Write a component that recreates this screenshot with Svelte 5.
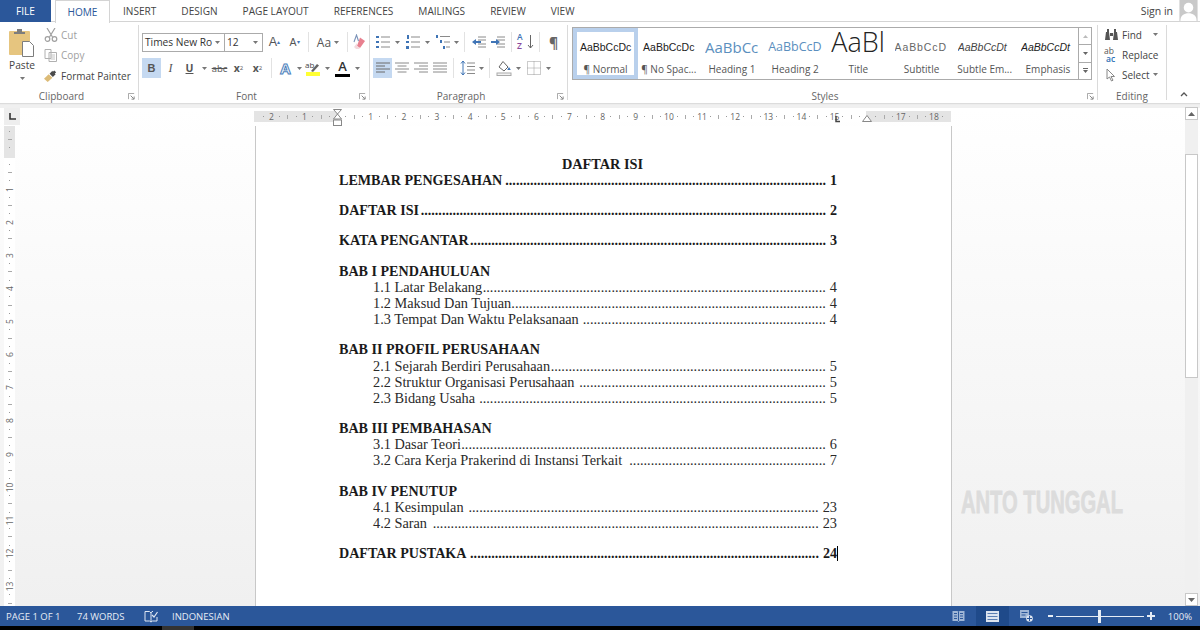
<script lang="ts">
  const tabs = ['INSERT', 'DESIGN', 'PAGE LAYOUT', 'REFERENCES', 'MAILINGS', 'REVIEW', 'VIEW'];

  const styles = [
    { name: '¶ Normal', sample: 'AaBbCcDc', kind: 'normal', on: true },
    { name: '¶ No Spac...', sample: 'AaBbCcDc', kind: 'normal' },
    { name: 'Heading 1', sample: 'AaBbCc', kind: 'h1' },
    { name: 'Heading 2', sample: 'AaBbCcD', kind: 'h2' },
    { name: 'Title', sample: 'AaBl', kind: 'title' },
    { name: 'Subtitle', sample: 'AaBbCcD', kind: 'sub' },
    { name: 'Subtle Em...', sample: 'AaBbCcDt', kind: 'em' },
    { name: 'Emphasis', sample: 'AaBbCcDt', kind: 'emph' }
  ];

  const toc = [
    [{ t: 'LEMBAR PENGESAHAN', p: 1, b: true }],
    [{ t: 'DAFTAR ISI', p: 2, b: true }],
    [{ t: 'KATA PENGANTAR', p: 3, b: true }],
    [
      { t: 'BAB I PENDAHULUAN', b: true },
      { t: '1.1 Latar Belakang', p: 4 },
      { t: '1.2 Maksud Dan Tujuan', p: 4 },
      { t: '1.3 Tempat Dan Waktu Pelaksanaan ', p: 4 }
    ],
    [
      { t: 'BAB II PROFIL PERUSAHAAN', b: true },
      { t: '2.1 Sejarah Berdiri Perusahaan', p: 5 },
      { t: '2.2 Struktur Organisasi Perusahaan ', p: 5 },
      { t: '2.3 Bidang Usaha ', p: 5 }
    ],
    [
      { t: 'BAB III PEMBAHASAN', b: true },
      { t: '3.1 Dasar Teori', p: 6 },
      { t: '3.2 Cara Kerja Prakerind di Instansi Terkait ', p: 7 }
    ],
    [
      { t: 'BAB IV PENUTUP', b: true },
      { t: '4.1 Kesimpulan ', p: 23 },
      { t: '4.2 Saran ', p: 23 }
    ],
    [{ t: 'DAFTAR PUSTAKA ', p: 24, b: true, end: true }]
  ];

  // fills a leader with as many dots as fit (a dot is a quarter em in Times)
  function leader(el: HTMLElement) {
    const size = parseFloat(getComputedStyle(el).fontSize);
    el.textContent = '.'.repeat(Math.floor(el.clientWidth / (size * 0.25)));
  }

  // ruler marks, four per centimetre; cm 0 is the page margin
  const mark = (i: number) => {
    if (i % 4 === 0) return i === 0 ? { k: 'none' } : { k: 'num', n: Math.abs(i / 4) };
    return { k: i % 2 === 0 ? 'tick' : 'dot' };
  };
  // cm 16 sits under the right indent marker
  const hMarks = Array.from({ length: 83 }, (_, i) => (i - 9 === 64 ? { k: 'none' } : mark(i - 9)));
  const vMarks = Array.from({ length: 58 }, (_, i) => mark(i - 3));
</script>

{#snippet caret()}
  <svg class="caret" viewBox="0 0 5 3"><path d="M0 0h5L2.500 3z" fill="#777" /></svg>
{/snippet}

{#snippet launcher()}
  <svg class="launch" viewBox="0 0 8 8"><path d="M.5 7V.5H7" fill="none" stroke="#999" /><path d="M3 3l3.500 3.500M7 4v3H4" fill="none" stroke="#777" /></svg>
{/snippet}

<div class="word">
  <nav class="tabs">
    <span class="file">FILE</span>
    <span class="home">HOME</span>
    {#each tabs as tab}
      <span class="tab">{tab}</span>
    {/each}
    <span class="signin">Sign in</span>
    <svg class="avatar" viewBox="0 0 19 22">
      <rect width="19" height="22" fill="#c9c9c9" />
      <circle cx="9.500" cy="8" r="5" fill="#fff" />
      <path d="M1 22c0-6 4-8 8.500-8s8.500 2 8.500 8z" fill="#fff" />
    </svg>
  </nav>

  <section class="ribbon">
    <div class="group clipboard">
      <div class="clip-body">
        <div class="paste">
          <svg width="26" height="28" viewBox="0 0 26 28">
            <rect x="0" y="2" width="21" height="24" rx="1" fill="#e6c57f" />
            <path d="M5 5V3h3V0h5v3h3v2z" fill="#7d7d7d" />
            <path d="M13.500 12.500h7l4 4v11h-11z" fill="#fff" stroke="#7d7d7d" />
          </svg>
          <span>Paste</span>
          {@render caret()}
        </div>
        <div class="clip-list">
          <div class="clip-item faded">
            <svg width="14" height="14" viewBox="0 0 14 14"><path d="M3 0l5.500 9M11 0L5.500 9" stroke="#a0a0a0" stroke-width="1.200" fill="none" /><circle cx="3.500" cy="11" r="2.300" fill="none" stroke="#a0a0a0" stroke-width="1.200" /><circle cx="10.500" cy="11" r="2.300" fill="none" stroke="#a0a0a0" stroke-width="1.200" /></svg>
            Cut
          </div>
          <div class="clip-item faded">
            <svg width="14" height="14" viewBox="0 0 14 14"><path d="M1 1.500h6v9H1zM5 4.500h7.500v9H5z" fill="#fff" stroke="#b0b0b0" /><path d="M6.500 7h4.500M6.500 9h4.500M6.500 11h4.500" stroke="#c4c4c4" /></svg>
            Copy
          </div>
          <div class="clip-item">
            <svg width="14" height="14" viewBox="0 0 15 14"><path d="M0 10l5-5 4 4-5 4.500z" fill="#dcbb77" /><path d="M6 4.500l3-3 .5 1L11 1l2 2-1.500 1.500 1 .5-3 3z" fill="#4a4a4a" /></svg>
            Format Painter
          </div>
        </div>
      </div>
      <footer>Clipboard {@render launcher()}</footer>
    </div>

    <div class="group font">
      <div class="rows">
        <div class="row top">
          <div class="combo name">Times New Ro {@render caret()}</div>
          <div class="combo size">12 {@render caret()}</div>
          <span class="btn grow">A<sup>▴</sup></span>
          <span class="btn shrink">A<sup>▾</sup></span>
          <i class="sep"></i>
          <span class="btn wide">Aa {@render caret()}</span>
          <i class="sep"></i>
          <span class="btn eraser">
            <svg width="16" height="16" viewBox="0 0 16 16"><path d="M9 3.500l5 3.500-5 7-3-2z" fill="#e8808f" /><path d="M6 12l3 2-1 1H5l-2-2 3-4z" fill="#f3d9dd" /><path d="M3 8l2.500-7 2 6" fill="none" stroke="#7b93b8" stroke-width="1.100" /></svg>
          </span>
        </div>
        <div class="row bottom">
          <span class="btn on bold">B</span>
          <span class="btn ital">I</span>
          <span class="btn under">U</span>
          <span class="dd">{@render caret()}</span>
          <span class="btn strike">abc</span>
          <span class="btn script">x<sub>2</sub></span>
          <span class="btn script">x<sup>2</sup></span>
          <i class="sep"></i>
          <span class="btn effect">A</span>
          <span class="dd small">{@render caret()}</span>
          <span class="btn">
            <svg width="16" height="16" viewBox="0 0 16 16"><rect x="1" y="12" width="14" height="4" fill="#ffff33" /><path d="M6 11l6-7 2 1.500L8 12z" fill="#666" /></svg>
            <b class="ab">ab</b>
          </span>
          <span class="dd">{@render caret()}</span>
          <span class="btn colour">A</span>
          <span class="dd">{@render caret()}</span>
        </div>
      </div>
      <footer>Font {@render launcher()}</footer>
    </div>

    <div class="group para">
      <div class="rows">
        <div class="row top">
          <span class="btn"><svg width="16" height="16" viewBox="0 0 16 16"><path d="M6 3h9M6 8h9M6 13h9" stroke="#8a8a8a" /><path d="M1 2h3v2H1zM1 7h3v2H1zM1 12h3v2H1z" fill="#3f74b5" /></svg></span>
          <span class="dd">{@render caret()}</span>
          <span class="btn"><svg width="16" height="16" viewBox="0 0 16 16"><path d="M6 3h9M6 8h9M6 13h9" stroke="#8a8a8a" /><path d="M2 1h2v4H2zM1 7h3v2H1zM1 12h3v3H1z" fill="#3f74b5" /></svg></span>
          <span class="dd">{@render caret()}</span>
          <span class="btn"><svg width="16" height="16" viewBox="0 0 16 16"><path d="M5 2.500h10M9 8h6M11 13h4" stroke="#8a8a8a" /><path d="M1 1h2v3H1zM5 6h2v3H5zM8 12h2v3H8z" fill="#3f74b5" /></svg></span>
          <span class="dd small">{@render caret()}</span>
          <i class="sep"></i>
          <span class="btn"><svg width="16" height="16" viewBox="0 0 16 16"><path d="M7 3h8M7 6h8M7 10h8M7 13h8" stroke="#8a8a8a" /><path d="M1 8l4-3v2h5v2H5v2z" fill="#3f74b5" /></svg></span>
          <span class="btn"><svg width="16" height="16" viewBox="0 0 16 16"><path d="M7 3h8M7 6h8M7 10h8M7 13h8" stroke="#8a8a8a" /><path d="M10 8L6 5v2H1v2h5v2z" fill="#3f74b5" /></svg></span>
          <i class="sep"></i>
          <span class="btn sort"><b>A</b><b class="z">Z</b><svg width="7" height="16" viewBox="0 0 7 16"><path d="M3.500 1v13M1 11l2.500 3L6 11" fill="none" stroke="#666" /></svg></span>
          <i class="sep"></i>
          <span class="btn pil">¶</span>
        </div>
        <div class="row bottom">
          <span class="btn on"><svg width="14" height="12" viewBox="0 0 14 12"><path d="M0 1h14M0 4h9M0 7h14M0 10h9" stroke="#6a6a6a" /></svg></span>
          <span class="btn"><svg width="14" height="12" viewBox="0 0 14 12"><path d="M0 1h14M2.500 4h9M0 7h14M2.500 10h9" stroke="#8a8a8a" /></svg></span>
          <span class="btn"><svg width="14" height="12" viewBox="0 0 14 12"><path d="M0 1h14M5 4h9M0 7h14M5 10h9" stroke="#8a8a8a" /></svg></span>
          <span class="btn"><svg width="14" height="12" viewBox="0 0 14 12"><path d="M0 1h14M0 4h14M0 7h14M0 10h14" stroke="#8a8a8a" /></svg></span>
          <i class="sep"></i>
          <span class="btn"><svg width="16" height="16" viewBox="0 0 16 16"><path d="M7 3h8M7 6.500h8M7 10h8M7 13.500h8" stroke="#8a8a8a" /><path d="M3 1v14M1 3.500L3 1l2 2.500M1 12.500L3 15l2-2.500" fill="none" stroke="#3f74b5" /></svg></span>
          <span class="dd small">{@render caret()}</span>
          <i class="sep"></i>
          <span class="btn"><svg width="16" height="16" viewBox="0 0 16 16"><path d="M3 7l4-5.500L12 7l-4 4z" fill="#fff" stroke="#666" /><path d="M13 7l1.800 3h-3.600z" fill="#3f74b5" /><rect x="1" y="13" width="14" height="2.500" fill="#f2f2f2" stroke="#aaa" /></svg></span>
          <span class="dd">{@render caret()}</span>
          <span class="btn"><svg width="14" height="14" viewBox="0 0 14 14"><path d="M.5.500h13v13H.5zM7 .5v13M.5 7h13" fill="none" stroke="#999" stroke-dasharray="1 1" /></svg></span>
          <span class="dd">{@render caret()}</span>
        </div>
      </div>
      <footer>Paragraph {@render launcher()}</footer>
    </div>

    <div class="group styles">
      <div class="gallery">
        <div class="cells">
          {#each styles as s}
            <div class="cell" class:on={s.on}>
              <div class="sample {s.kind}">{s.sample}</div>
              <div class="sname">{s.name}</div>
            </div>
          {/each}
        </div>
        <div class="scroller">
          <span><svg viewBox="0 0 5 3"><path d="M0 3h5L2.500 0z" fill="#bbb" /></svg></span>
          <span><svg viewBox="0 0 5 3"><path d="M0 0h5L2.500 3z" fill="#666" /></svg></span>
          <span><svg viewBox="0 0 5 5"><path d="M0 0h5v1H0zM0 2h5L2.500 5z" fill="#666" /></svg></span>
        </div>
      </div>
      <footer>Styles {@render launcher()}</footer>
    </div>

    <div class="group editing">
      <div class="edit-list">
        <div class="clip-item">
          <svg width="15" height="14" viewBox="0 0 15 14"><path d="M1 12l1-8h3l1 8zM9 12l1-8h3l1 8zM3 1h2v3H3zM10 1h2v3h-2zM6 5h3v3H6z" fill="#555" /></svg>
          Find <span class="find-dd">{@render caret()}</span>
        </div>
        <div class="clip-item">
          <span class="abac"><b>ab</b><b class="ac">ac</b></span>
          Replace
        </div>
        <div class="clip-item">
          <svg width="15" height="14" viewBox="0 0 15 14"><path d="M3 1v10l2.500-2 2 4 1.500-.8-2-3.700h3.500z" fill="#fff" stroke="#888" /></svg>
          Select {@render caret()}
        </div>
      </div>
      <footer>Editing</footer>
    </div>

    <div class="collapse">
      <svg width="8" height="5" viewBox="0 0 8 5"><path d="M1 4l3-3 3 3" fill="none" stroke="#555" stroke-width="1.300" /></svg>
    </div>
  </section>

  <main class="work">
    <div class="topline">
      <div class="corner">
        <svg width="7" height="7" viewBox="0 0 7 7"><path d="M1 0v6h6" fill="none" stroke="#333" stroke-width="1.600" /></svg>
      </div>
      <div class="hruler">
        {#each hMarks as m}
          <span class="hcell">
            {#if m.k === 'num'}{m.n}{:else if m.k === 'tick'}<i class="vtick"></i>{:else if m.k === 'dot'}<i class="pip"></i>{/if}
          </span>
        {/each}
        <svg class="indent-l" width="10" height="17" viewBox="0 0 10 17">
          <path d="M.5.500h8L4.500 5zM4.500 5l4 5h-8z" fill="#fff" stroke="#888" />
          <rect x=".5" y="11" width="8" height="5.500" fill="#fff" stroke="#888" />
        </svg>
        <svg class="indent-r" width="10" height="7" viewBox="0 0 10 7"><path d="M5 .5l4.500 6h-9z" fill="#fff" stroke="#888" /></svg>
        <svg class="tabstop" width="7" height="7" viewBox="0 0 7 7"><path d="M3 0v5.500h4" fill="none" stroke="#444" stroke-width="1.500" /></svg>
      </div>
    </div>

    <div class="below">
      <div class="vruler">
        {#each vMarks as m}
          <span class="vcell">
            {#if m.k === 'num'}<em>{m.n}</em>{:else if m.k === 'tick'}<i class="htick"></i>{:else if m.k === 'dot'}<i class="pip"></i>{/if}
          </span>
        {/each}
      </div>

      <article class="page">
        <h1>DAFTAR ISI</h1>
        {#each toc as block}
          <div class="block">
            {#each block as line}
              <div class="line" class:bold={line.b} class:sub={!line.b}>
                <span class="label">{line.t}</span>
                {#if line.p}
                  <span class="leader" use:leader></span>
                  <span class="num">{line.p}</span>
                {/if}
                {#if line.end}<i class="cursor"></i>{/if}
              </div>
            {/each}
          </div>
        {/each}
      </article>

      <aside class="scrollbar">
        <span class="arrow"><svg viewBox="0 0 7 4"><path d="M0 4h7L3.500 0z" fill="#666" /></svg></span>
        <span class="thumb"></span>
        <span class="arrow down"><svg viewBox="0 0 7 4"><path d="M0 0h7L3.500 4z" fill="#666" /></svg></span>
      </aside>

      <div class="watermark">ANTO TUNGGAL</div>
    </div>
  </main>

  <footer class="status">
    <span class="s-page">PAGE 1 OF 1</span>
    <span class="s-words">74 WORDS</span>
    <svg class="s-book" width="14" height="13" viewBox="0 0 14 13"><path d="M1 1.500h4.500L7 3v9l-1.500-1H1zM7 3l1-1.500h1M7 12l1.500-1H13V7" fill="none" stroke="#dfe7f3" /><path d="M8 5l2 2 3.500-5" fill="none" stroke="#dfe7f3" stroke-width="1.200" /></svg>
    <span class="s-lang">INDONESIAN</span>

    <div class="s-right">
      <svg width="13" height="12" viewBox="0 0 13 12"><path d="M.5 1h5L6.500 2l1-1h5v10h-5l-1 1-1-1h-5z" fill="#9fb6d6" /><path d="M6.500 2v9M2 3.500h3M2 6h3M2 8.500h3M8 3.500h3M8 6h3M8 8.500h3" stroke="#2b579a" /></svg>
      <span class="s-view">
        <svg width="13" height="11" viewBox="0 0 13 11"><rect width="13" height="11" fill="#dce4f0" /><path d="M1.500 2.500h10M1.500 5.500h10M1.500 8.500h10" stroke="#5a7eb3" /></svg>
      </span>
      <svg width="13" height="12" viewBox="0 0 13 12"><path d="M0 0h9v8H0z" fill="#9fb6d6" /><path d="M1.500 2.500h6M1.500 5h4" stroke="#2b579a" /><circle cx="9.500" cy="8.500" r="3.300" fill="#dce4f0" /><path d="M7 8.500h5M9.500 6v5" stroke="#2b579a" /></svg>
      <div class="zoom">
        <span class="zm"></span>
        <span class="zline"><i class="zthumb"></i></span>
        <span class="zp"></span>
      </div>
      <span class="s-pct">100%</span>
    </div>
  </footer>
  <div class="taskbar"><i></i></div>
</div>

<style>
  :global(body) { margin: 0; background: #fff; }

  .word {
    width: 1200px;
    height: 630px;
    display: flex;
    flex-direction: column;
    overflow: hidden;
    font-family: 'Open Sans', 'Noto Sans', sans-serif;
    color: #444;
    background: #fff;
  }

  /* tabs */
  .tabs {
    height: 21px;
    flex: none;
    display: flex;
    align-items: center;
    font-size: 10.1px;
    color: #444;
    border-bottom: 1px solid #d4d4d4;
    position: relative;
  }
  .file {
    width: 51px;
    height: 22px;
    margin-bottom: -1px;
    background: #2b579a;
    color: #fff;
    display: flex;
    align-items: center;
    justify-content: center;
  }
  .home {
    width: 53px;
    height: 22px;
    margin: 0 13px 0 4px;
    box-sizing: content-box;
    border: 1px solid #d4d4d4;
    border-bottom: 0;
    background: #fff;
    color: #2b579a;
    display: flex;
    align-items: center;
    justify-content: center;
    position: relative;
    top: 0.5px;
  }
  .tab { margin-right: 25px; white-space: nowrap; }
  .signin { margin-left: auto; margin-right: 6px; font-size: 10.5px; }
  .avatar { width: 19px; height: 21px; margin-right: 2px; }

  /* ribbon */
  .ribbon {
    height: 81px;
    flex: none;
    display: flex;
    background: #fff;
    border-bottom: 1px solid #dcdcdc;
    box-sizing: content-box;
  }
  .group {
    position: relative;
    box-sizing: border-box;
    margin: 3px 0 3px;
    border-right: 1px solid #dadada;
    display: flex;
    flex-direction: column;
  }
  .group footer {
    position: absolute;
    left: 0;
    right: 0;
    bottom: -3px;
    box-sizing: border-box;
    padding-right: 15px;
    text-align: center;
    font-size: 10px;
    line-height: 13px;
    color: #666;
  }
  .group.editing footer { padding-right: 0; }
  .launch { position: absolute; right: 3px; bottom: 3px; width: 7px; height: 7px; }
  .caret { width: 5px; height: 3px; flex: none; }

  .clipboard { width: 139px; }
  .clip-body { display: flex; padding-top: 2px; }
  .paste {
    width: 44px;
    display: flex;
    flex-direction: column;
    align-items: center;
    font-size: 10.2px;
    padding-top: 2px;
  }
  .paste span { line-height: 14px; margin-top: 1px; }
  .paste .caret { margin-top: 4.5px; }
  .clip-list { display: flex; flex-direction: column; gap: 5.5px; }
  .clip-item {
    height: 15px;
    display: flex;
    align-items: center;
    gap: 3px;
    font-size: 10px;
    white-space: nowrap;
    color: #444;
  }
  .clip-item.faded { color: #a0a0a0; }

  .rows { display: flex; flex-direction: column; gap: 6px; padding: 7px 0 0 3px; }
  .row { display: flex; align-items: center; height: 20px; }
  .font { width: 231px; }
  .para { width: 198px; }

  .btn {
    width: 19px;
    height: 20px;
    flex: none;
    display: flex;
    align-items: center;
    justify-content: center;
    font-size: 11px;
    position: relative;
    color: #555;
  }
  .btn.on { background: #c5d9f1; }
  .btn.wide { width: 30px; gap: 3px; font-size: 12px; white-space: nowrap; }
  .btn.eraser { margin-left: -3px; }
  .dd { width: 11px; height: 20px; flex: none; display: flex; align-items: center; justify-content: center; }
  .dd.small { width: 8px; }
  .sep { width: 1px; height: 20px; background: #e2e2e2; margin: 0 4px; flex: none; }

  .combo {
    height: 19px;
    box-sizing: border-box;
    border: 1px solid #ababab;
    background: #fff;
    display: flex;
    align-items: center;
    justify-content: space-between;
    font-size: 10.2px;
    color: #333;
    padding: 0 4px 0 2px;
    flex: none;
    white-space: nowrap;
  }
  .combo.name { width: 83px; }
  .combo.size { width: 38px; border-left: 0; margin-right: 2px; }
  .grow { font-size: 12.5px; font-family: 'Liberation Sans', sans-serif; }
  .shrink { font-size: 10.5px; font-family: 'Liberation Sans', sans-serif; margin-left: 1px; }
  .grow sup, .shrink sup { font-size: 6px; color: #3f74b5; line-height: 0; }

  .bold { font-weight: 700; font-family: 'Liberation Sans', sans-serif; font-size: 11px; }
  .ital { font-family: 'Liberation Serif', serif; font-style: italic; font-size: 12px; }
  .under { text-decoration: underline; font-weight: 700; font-size: 10.5px; }
  .strike { text-decoration: line-through; font-size: 9.5px; }
  .script { font-weight: 700; font-size: 10.5px; }
  .script sub, .script sup { font-size: 6px; font-weight: 400; line-height: 0; }
  .effect { color: #fff; font-size: 15px; font-weight: 700; -webkit-text-stroke: 1px #4a7ebb; }
  .colour { font-size: 13px; font-weight: 600; color: #333; line-height: 14px; padding-bottom: 4px; box-sizing: border-box; }
  .colour::after { content: ''; position: absolute; left: 2px; right: 2px; bottom: 1px; height: 3px; background: #000; }
  .ab { position: absolute; left: 2px; top: 1px; font-size: 8px; font-weight: 400; color: #444; }

  .sort { gap: 0; }
  .sort b { position: absolute; left: 1px; top: 0; font-size: 8.5px; color: #3f74b5; font-weight: 600; line-height: 10px; }
  .sort .z { top: 9px; color: #8a4a9c; }
  .sort svg { margin-left: 9px; }
  .pil { font-size: 14px; font-weight: 700; color: #666; }

  /* styles gallery */
  .styles { width: 530px; padding: 2px 0 0 4px; }
  .gallery { display: flex; height: 53px; }
  .cells {
    display: flex;
    border: 1px solid #ababab;
    box-sizing: border-box;
    width: 507px;
    height: 53px;
    padding: 1px;
    background: #fff;
  }
  .cell {
    width: 63.2px;
    flex: none;
    box-sizing: border-box;
    border: 2px solid transparent;
    display: flex;
    flex-direction: column;
    align-items: center;
    overflow: hidden;
  }
  .cell.on { box-shadow: 0 0 0 1px #b9d0ec inset, 0 0 0 1px #b9d0ec; border-color: #b9d0ec; }
  .sample {
    height: 31px;
    width: 54px;
    overflow: hidden;
    display: flex;
    align-items: center;
    justify-content: center;
    font-family: 'Liberation Sans', sans-serif;
    font-size: 10.5px;
    color: #222;
    white-space: nowrap;
    flex: none;
  }
  .sample.h1 { font-size: 15px; color: #5b8fbe; font-family: 'Open Sans', sans-serif; justify-content: flex-start; }
  .sample.h2 { font-size: 12.5px; color: #5b8fbe; font-family: 'Open Sans', sans-serif; justify-content: flex-start; }
  .sample.title { font-size: 27px; color: #222; font-family: 'Open Sans', sans-serif; font-weight: 300; justify-content: flex-start; line-height: 26px; align-items: flex-end; padding-bottom: 7px; box-sizing: border-box; }
  .sample.sub { color: #666; letter-spacing: 0.9px; justify-content: flex-start; }
  .sample.em { font-style: italic; color: #444; justify-content: flex-start; }
  .sample.emph { font-style: italic; color: #222; justify-content: flex-start; }
  .sname { font-size: 10px; line-height: 14px; color: #555; white-space: nowrap; }
  .scroller {
    width: 13px;
    height: 53px;
    box-sizing: border-box;
    border: 1px solid #ababab;
    border-left: 0;
    display: flex;
    flex-direction: column;
  }
  .scroller span { flex: 1; display: flex; align-items: center; justify-content: center; border-bottom: 1px solid #ababab; }
  .scroller span:last-child { border-bottom: 0; }
  .scroller svg { width: 5px; height: auto; }

  .editing { width: 69px; padding: 2px 0 0 6px; }
  .edit-list { display: flex; flex-direction: column; gap: 5px; }
  .find-dd { margin-left: 8px; display: flex; }
  .abac { width: 15px; height: 15px; position: relative; font-size: 8.5px; line-height: 7.5px; color: #555; }
  .abac b { font-weight: 400; position: absolute; left: 0; top: 0; }
  .abac .ac { top: 8px; left: 2px; color: #2b6fb5; font-weight: 600; }
  .collapse { flex: 1; display: flex; align-items: flex-end; justify-content: center; padding-bottom: 6px; }

  /* workspace */
  .work {
    flex: 1;
    min-height: 0;
    display: flex;
    flex-direction: column;
    padding-top: 3px;
    border-top: 1px solid #ececec;
    background: linear-gradient(#f0f0f0 0 3px, #fff 3px, #f0f0f0);
  }
  .topline { height: 18px; flex: none; display: flex; align-items: flex-start; padding-left: 4px; }
  .corner {
    width: 16px;
    height: 17px;
    background: #eee;
    display: flex;
    align-items: center;
    justify-content: center;
    flex: none;
  }
  .hruler {
    margin-left: 234px;
    width: 697px;
    height: 11px;
    box-sizing: border-box;
    padding-left: 5px;
    display: flex;
    position: relative;
    margin-top: 3px;
    font-size: 8.5px;
    color: #666;
    background: linear-gradient(90deg, #e4e4e4 84px, #fff 84px 612px, #e4e4e4 612px);
  }
  .hcell { width: 8.295px; flex: none; display: flex; align-items: center; justify-content: center; white-space: nowrap; line-height: 11px; }
  .vtick { width: 1px; height: 4px; background: #aaa; flex: none; }
  .htick { width: 4px; height: 1px; background: #aaa; flex: none; }
  .pip { width: 1px; height: 1px; background: #999; flex: none; }
  .indent-l { position: absolute; left: 79px; top: -2px; }
  .indent-r { position: absolute; left: 608px; top: 4px; }
  .tabstop { position: absolute; left: 579px; top: 5px; }

  .below { flex: 1; min-height: 0; display: flex; position: relative; }
  .vruler {
    width: 11px;
    margin-left: 4px;
    flex: none;
    overflow: hidden;
    padding-top: 1px;
    box-sizing: border-box;
    font-size: 8.5px;
    color: #666;
    background: linear-gradient(#e4e4e4 32px, #fff 32px);
    display: flex;
    flex-direction: column;
  }
  .vcell { height: 8.295px; flex: none; display: flex; align-items: center; justify-content: center; white-space: nowrap; }
  .vcell em { font-style: normal; transform: rotate(-90deg); }

  .page {
    width: 697px;
    margin-left: 240px;
    box-sizing: border-box;
    padding: 29.5px 85px 0 83px;
    background: #fff;
    border-left: 1px solid #c8c8c8;
    border-right: 1px solid #c8c8c8;
    font-family: 'Liberation Serif', 'Times New Roman', serif;
    color: #1a1a1a;
    flex: none;
    overflow: hidden;
  }
  h1 { font-size: 14.3px; margin: 0; text-align: center; line-height: 16.1px; font-weight: 700; }
  .block { margin-top: 14.3px; width: 498px; }
  h1 + .block { margin-top: 0; }
  .line { display: flex; line-height: 16.1px; height: 16.1px; position: relative; }
  .line.bold { font-weight: 700; font-family: inherit; font-size: 14.1px; }
  .line.sub { padding-left: 34px; font-size: 14.3px; color: #2a2a2a; }
  .label { white-space: pre; flex: none; }
  .leader { flex: 1; min-width: 0; overflow: hidden; white-space: nowrap; text-align: right; margin-right: 4px; }
  .num { flex: none; }
  .cursor { position: absolute; right: -1px; top: 1px; width: 1px; height: 15px; background: #000; }

  .scrollbar {
    margin-left: auto;
    margin-right: 2px;
    width: 13px;
    flex: none;
    display: flex;
    flex-direction: column;
    background: #f0f0f0;
    margin-top: -19px;
    box-sizing: border-box;
  }
  .arrow { height: 13px; display: flex; align-items: center; justify-content: center; background: #fff; border: 1px solid #c8c8c8; box-sizing: border-box; flex: none; }
  .arrow svg { width: 7px; }
  .arrow.down { margin-top: auto; }
  .thumb { height: 224px; margin-top: 34px; background: #fff; border: 1px solid #c8c8c8; box-sizing: border-box; flex: none; }

  .watermark {
    position: absolute;
    left: 961px;
    top: 360px;
    font-family: 'Liberation Sans', sans-serif;
    font-weight: 700;
    font-size: 31px;
    line-height: 34px;
    color: #dcdcdc;
    -webkit-text-stroke: 0.8px #dcdcdc;
    white-space: nowrap;
    transform: scaleX(0.65);
    transform-origin: left center;
  }

  /* status bar */
  .status {
    height: 20px;
    flex: none;
    display: flex;
    align-items: center;
    background: #2b579a;
    color: #e6ecf5;
    font-size: 9.5px;
    white-space: nowrap;
  }
  .s-page { margin-left: 6px; width: 71px; }
  .s-words { width: 67px; }
  .s-book { margin-right: 14px; }
  .s-right { margin-left: auto; display: flex; align-items: center; height: 100%; padding-right: 8px; }
  .s-view { width: 33px; height: 100%; background: #1f4a8a; display: flex; align-items: center; justify-content: center; margin: 0 11px; }
  .zoom { display: flex; align-items: center; margin-left: 15px; }
  .zm { width: 5px; height: 2px; background: #e6ecf5; }
  .zline { width: 88px; height: 1px; margin: 0 3px; background: #e6ecf5; position: relative; }
  .zthumb { position: absolute; left: 42px; top: -6px; width: 3px; height: 13px; background: #e6ecf5; }
  .zp { width: 8px; height: 8px; background: linear-gradient(#e6ecf5, #e6ecf5) center/8px 2px no-repeat, linear-gradient(#e6ecf5, #e6ecf5) center/2px 8px no-repeat; }
  .s-pct { margin-left: 13px; }

  .taskbar { height: 4px; flex: none; background: #000; padding-left: 162px; }
  .taskbar i { display: block; width: 32px; height: 4px; background: #333; }
</style>
